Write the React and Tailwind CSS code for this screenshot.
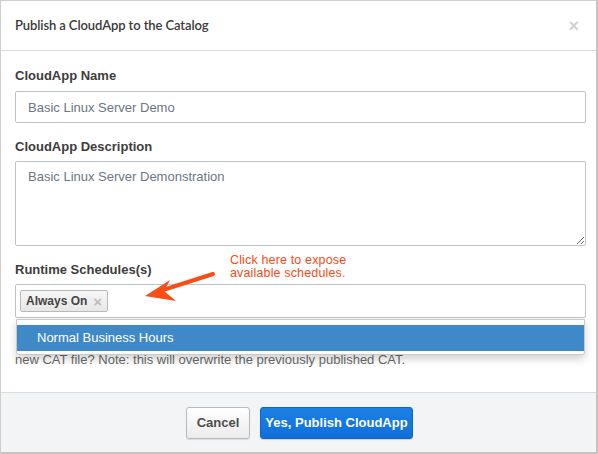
import { useState } from "react";

export default function App() {
  const [name, setName] = useState("Basic Linux Server Demo");
  const [desc, setDesc] = useState("Basic Linux Server Demonstration");

  return (
    <div className="w-[598px] h-[454px] bg-white font-['Liberation_Sans',Arial,sans-serif] text-[#333]">
      <div className="w-full h-full flex flex-col border border-[#cfcfcf] border-r-2 border-r-[#c4c4c4] border-b-2 border-b-[#c4c4c4]">
        {/* Header */}
        <div className="h-[50px] shrink-0 flex items-center justify-between pl-[14px] pr-[17px] border-b border-[#dcdcdc]">
          <h3 className="font-['Lato',sans-serif] font-semibold text-[13px] text-[#3a3a3a] tracking-[-0.1px]">
            Publish a CloudApp to the Catalog
          </h3>
          <span className="text-[#d2d2d2] text-[18px] font-bold leading-none">×</span>
        </div>

        {/* Body */}
        <div className="relative flex-1 px-[14px] pt-[17px]">
          <label className="block text-[13px] font-bold text-[#3d3d3d] leading-[16px]">CloudApp Name</label>
          <input
            value={name}
            onChange={(e) => setName(e.target.value)}
            className="mt-[7px] w-[571px] h-[32px] border border-[#bcc3c9] rounded-[2px] px-[12px] text-[13px] text-[#6a7683] outline-none"
          />

          <label className="block mt-[16px] text-[13px] font-bold text-[#3d3d3d] leading-[16px]">CloudApp Description</label>
          <textarea
            value={desc}
            onChange={(e) => setDesc(e.target.value)}
            className="block mt-[6px] w-[571px] h-[85px] border border-[#bcc3c9] rounded-[2px] px-[12px] py-[5px] text-[13px] text-[#6a7683] outline-none resize-y"
          />

          <label className="block mt-[16px] text-[13px] font-bold text-[#3d3d3d] leading-[16px]">Runtime Schedules(s)</label>
          <div className="relative mt-[6px] w-[571px] h-[34px] border border-[#bcc3c9] rounded-[2px] flex items-center px-[4px]">
            <span className="flex items-center gap-[6px] h-[22px] px-[5px] border border-[#b9b9b9] rounded-[2px] bg-gradient-to-b from-[#f7f7f7] to-[#e6e6e6] text-[12px] font-bold text-[#444]">
              Always On
              <span className="text-[#bdbdbd] text-[15px] font-bold leading-none">×</span>
            </span>

            {/* Dropdown */}
            <div className="absolute left-0 top-[34px] w-[569px] h-[36px] bg-white border border-[#c9c9c9] rounded-b-[3px] shadow-[0_4px_8px_rgba(0,0,0,0.18)] pt-[5px] z-10">
              <div className="h-[26px] bg-[#3f89c9] flex items-center pl-[20px] text-[13px] text-white">
                Normal Business Hours
              </div>
            </div>
          </div>

          {/* first line of the notice sits under the open dropdown */}
          <div className="h-[32px]" />
          <p className="text-[13px] leading-[20px] text-[#6a6a6a]">
            new CAT file? Note: this will overwrite the previously published CAT.
          </p>

          {/* Annotation */}
          <div className="absolute left-[229px] top-[203px] text-[12.5px] leading-[13px] tracking-[0.15px] text-[#fc4a14]">
            <div>Click here to expose</div>
            <div>available schedules.</div>
          </div>
          <svg className="absolute left-[130px] top-[213px]" width="100" height="45" viewBox="130 263 100 45">
            <line x1="212" y1="273" x2="162" y2="289" stroke="#f74d16" strokeWidth="4" strokeLinecap="round" />
            <polygon points="144,295 169,279 163,290 175,300" fill="#f74d16" />
          </svg>
        </div>

        {/* Footer */}
        <div className="h-[60px] shrink-0 bg-[#f3f4f6] border-t border-[#dcdcdc] flex items-center justify-center gap-[10px] pl-[2px]">
          <button className="w-[64px] h-[32px] rounded-[3px] border border-[#b9b9b9] bg-gradient-to-b from-white to-[#ececec] text-[13px] font-bold text-[#4d4d4d] shadow-[0_1px_1px_rgba(0,0,0,0.1)]">
            Cancel
          </button>
          <button className="w-[153px] h-[32px] rounded-[3px] border border-[#0f66c6] bg-gradient-to-b from-[#1b80e6] to-[#0f6fd8] text-[13px] font-bold text-white shadow-[0_1px_1px_rgba(0,0,0,0.15)]">
            Yes, Publish CloudApp
          </button>
        </div>
      </div>
    </div>
  );
}
